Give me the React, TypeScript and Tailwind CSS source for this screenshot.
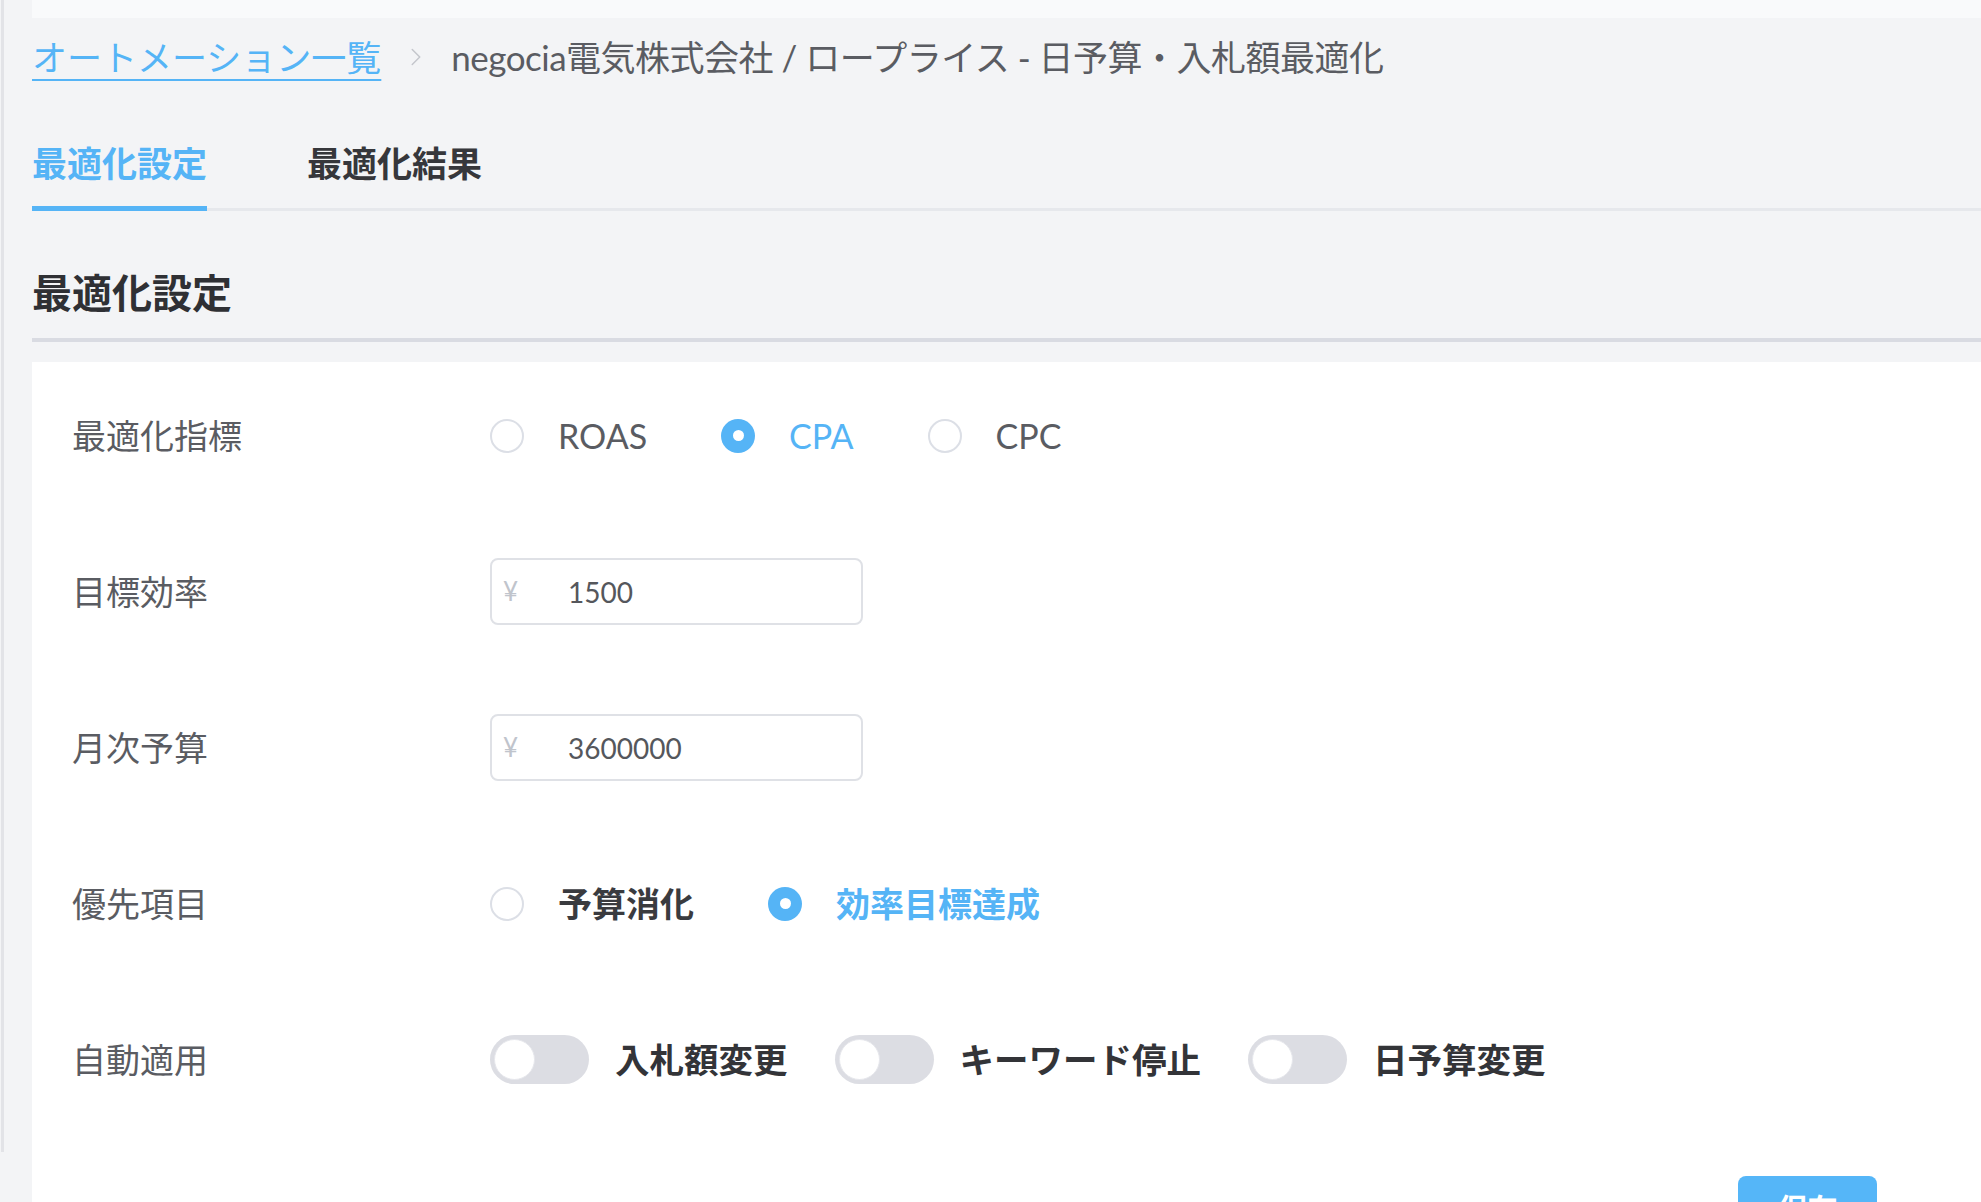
import { useState } from "react";
import { ChevronRight } from "lucide-react";

function Radio({
  label,
  checked,
  bold,
  onClick,
}: {
  label: string;
  checked: boolean;
  bold?: boolean;
  onClick: () => void;
}) {
  return (
    <button
      type="button"
      onClick={onClick}
      className="flex items-center gap-[34px] mr-[74px]"
    >
      {checked ? (
        <span className="w-[34px] h-[34px] rounded-full bg-[#55b4f6] flex items-center justify-center">
          <span className="w-[11px] h-[11px] rounded-full bg-white" />
        </span>
      ) : (
        <span className="w-[34px] h-[34px] rounded-full border-2 border-[#dcdfe6] bg-white" />
      )}
      <span
        className={
          checked
            ? "text-[#55b4f6] " + (bold ? "font-semibold" : "")
            : bold
              ? "text-[#3a3b3f] font-semibold"
              : "text-[#5a5c62]"
        }
      >
        {label}
      </span>
    </button>
  );
}

function Toggle({ label }: { label: string }) {
  const [on, setOn] = useState(false);
  return (
    <div className="flex items-center mr-[47px]">
      <button
        type="button"
        onClick={() => setOn(!on)}
        className={
          "w-[99px] h-[49px] rounded-full p-[4px] flex transition " +
          (on ? "bg-[#55b4f6] justify-end" : "bg-[#dcdde3] justify-start")
        }
      >
        <span className="w-[41px] h-[41px] rounded-full bg-white border border-[#e6e7ec]" />
      </button>
      <span className="ml-[26px] text-[34.5px] text-[#333438] font-semibold">{label}</span>
    </div>
  );
}

function Row({ label, children }: { label: string; children: React.ReactNode }) {
  return (
    <div className="flex items-center h-[67px]">
      <div className="w-[418px] text-[#5a5c62]">{label}</div>
      <div className="flex items-center">{children}</div>
    </div>
  );
}

function MoneyInput({ value }: { value: string }) {
  return (
    <div className="w-[373px] h-[67px] rounded-[8px] border-2 border-[#dfe1e6] bg-white flex items-center pl-[11px]">
      <span className="w-[65px] text-[26px] text-[#c0c4cc] font-['Lato',sans-serif]">¥</span>
      <span className="text-[28px] text-[#55575c] font-['Lato',sans-serif]">{value}</span>
    </div>
  );
}

export default function App() {
  const [metric, setMetric] = useState("CPA");
  const [priority, setPriority] = useState("efficiency");
  const [tab, setTab] = useState(0);

  return (
    <div
      className="min-h-screen bg-[#f3f4f6] flex"
      style={{ fontFamily: "Lato, 'Noto Sans CJK JP', sans-serif" }}
    >
      {/* left edge */}
      <div className="w-[32px] shrink-0">
        <div className="ml-[1px] w-[3px] h-[1152px] bg-[#e2e3e7]" />
      </div>

      <main className="flex-1 flex flex-col text-[34px]">
        <div className="h-[18px] bg-[#f9fafb]" />

        {/* BREADCRUMB */}
        <div className="h-[78px] flex items-center text-[35px] leading-none">
          <a href="#" className="text-[#55b4f6] underline underline-offset-[8px] decoration-2">
            オートメーション一覧
          </a>
          <ChevronRight
            className="mx-[20px] w-[30px] h-[30px] text-[#c4c6cc]"
            strokeWidth={1.2}
          />
          <span className="text-[#5a5c62] tracking-[-0.5px]">
            negocia電気株式会社 / ロープライス - 日予算・入札額最適化
          </span>
        </div>

        {/* TABS */}
        <div className="flex border-b-[3px] border-[#e6e8ec]">
          {["最適化設定", "最適化結果"].map((t, i) => (
            <button
              key={t}
              type="button"
              onClick={() => setTab(i)}
              className={
                "pt-[47px] pb-[23px] leading-[40px] text-[35px] font-semibold -mb-[3px] border-b-[5px] " +
                (i === 0 ? "mr-[100px] " : "") +
                (tab === i
                  ? "text-[#55b4f6] border-[#55b4f6]"
                  : "text-[#36373b] border-transparent")
              }
            >
              {t}
            </button>
          ))}
        </div>

        {/* HEADING */}
        <div className="pt-[58px] pb-[21px] border-b-4 border-[#d9dbe2]">
          <h1 className="text-[40px] leading-[48px] font-bold text-[#2f3034]">最適化設定</h1>
        </div>

        {/* FORM CARD */}
        <section className="mt-[20px] flex-1 bg-white pl-[40px] pt-[40px] flex flex-col">
          <div className="flex flex-col gap-[89px]">
            <Row label="最適化指標">
              {["ROAS", "CPA", "CPC"].map((m) => (
                <Radio key={m} label={m} checked={metric === m} onClick={() => setMetric(m)} />
              ))}
            </Row>

            <Row label="目標効率">
              <MoneyInput value="1500" />
            </Row>

            <Row label="月次予算">
              <MoneyInput value="3600000" />
            </Row>

            <Row label="優先項目">
              <Radio
                label="予算消化"
                bold
                checked={priority === "budget"}
                onClick={() => setPriority("budget")}
              />
              <Radio
                label="効率目標達成"
                bold
                checked={priority === "efficiency"}
                onClick={() => setPriority("efficiency")}
              />
            </Row>

            <Row label="自動適用">
              <Toggle label="入札額変更" />
              <Toggle label="キーワード停止" />
              <Toggle label="日予算変更" />
            </Row>
          </div>

          <div className="flex justify-end pr-[104px] mt-[83px]">
            <button
              type="button"
              className="w-[139px] h-[64px] rounded-[8px] bg-[#55b6f8] text-white text-[30px] font-semibold"
            >
              保存
            </button>
          </div>
        </section>
      </main>
    </div>
  );
}
